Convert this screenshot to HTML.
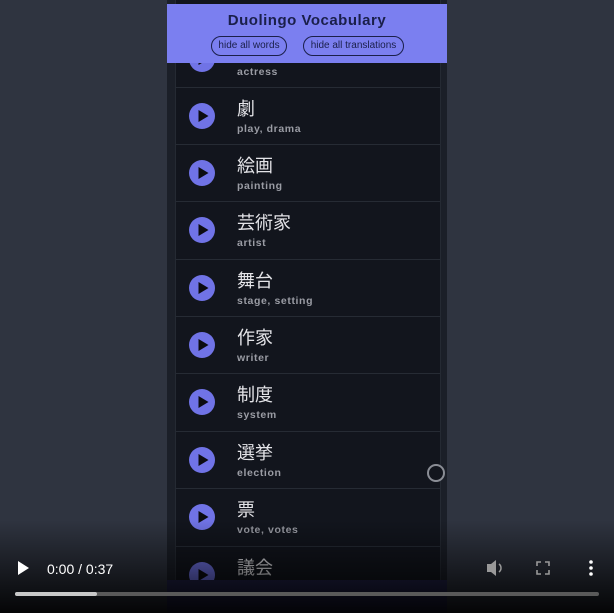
<!DOCTYPE html>
<html><head><meta charset="utf-8"><style>
html,body{margin:0;padding:0;width:614px;height:613px;overflow:hidden;background:#2f3440;font-family:"Liberation Sans","Noto Sans CJK JP",sans-serif}
#phone{position:absolute;left:167px;top:0;width:280px;height:613px;background:#1b1f28}
#list{position:absolute;left:175px;top:0;width:264px;height:613px;background:#12151d;border-left:1px solid #252a33;border-right:1px solid #252a33}
.row{position:absolute;left:0;width:264px;height:57px;border-top:1px solid #262b34}
.btn{position:absolute;left:13px;top:15px;width:26px;height:26px}
.w{position:absolute;left:61px;top:7px;font-size:18px;color:#e4e4e8}
.t{position:absolute;left:61px;top:35px;font-size:10.5px;color:#9a9ca4;letter-spacing:0.6px;font-weight:bold}
#hdr{position:absolute;left:167px;top:4px;width:280px;height:59px;background:#7b7ff0}
#hdr h1{margin:0;position:absolute;top:8px;width:100%;text-align:center;font-size:15px;color:#1a1f4a;letter-spacing:0.5px}
.pill{position:absolute;top:32px;height:20px;border:1.5px solid #1a1f4a;border-radius:10px;font-size:10px;text-align:center;color:#1a1f4a;box-sizing:border-box;line-height:17px}
#grad{position:absolute;left:0;top:520px;width:614px;height:93px;background:linear-gradient(rgba(0,0,0,0),rgba(0,0,0,0.9))}
#foot{position:absolute;left:167px;top:580px;width:280px;height:33px;background:#22234a}
</style></head><body>
<svg width="0" height="0" style="position:absolute"><defs><g id="pb"><circle cx="13" cy="13" r="13" fill="#7073e6"/><path d="M9.5 7 L19.5 13 L9.5 19Z" fill="#0c0c10"/></g></defs></svg>
<div id="phone"></div>
<div id="list">
<div class="row" style="top:30px"><svg class="btn"><use href="#pb"/></svg><div class="t">actress</div></div>
<div class="row" style="top:87px"><svg class="btn"><use href="#pb"/></svg><div class="w">劇</div><div class="t">play, drama</div></div>
<div class="row" style="top:144px"><svg class="btn"><use href="#pb"/></svg><div class="w">絵画</div><div class="t">painting</div></div>
<div class="row" style="top:201px"><svg class="btn"><use href="#pb"/></svg><div class="w">芸術家</div><div class="t">artist</div></div>
<div class="row" style="top:259px"><svg class="btn"><use href="#pb"/></svg><div class="w">舞台</div><div class="t">stage, setting</div></div>
<div class="row" style="top:316px"><svg class="btn"><use href="#pb"/></svg><div class="w">作家</div><div class="t">writer</div></div>
<div class="row" style="top:373px"><svg class="btn"><use href="#pb"/></svg><div class="w">制度</div><div class="t">system</div></div>
<div class="row" style="top:431px"><svg class="btn"><use href="#pb"/></svg><div class="w">選挙</div><div class="t">election</div></div>
<div class="row" style="top:488px"><svg class="btn"><use href="#pb"/></svg><div class="w">票</div><div class="t">vote, votes</div></div>
<div class="row" style="top:546px"><svg class="btn"><use href="#pb"/></svg><div class="w">議会</div></div>
</div>
<div style="position:absolute;left:427px;top:464px;width:14px;height:14px;border:2px solid #8a8d95;border-radius:50%;background:#12151d"></div>
<div id="foot"></div>
<div id="hdr"><h1>Duolingo Vocabulary</h1>
<div class="pill" style="left:44px;width:76px">hide all words</div>
<div class="pill" style="left:136px;width:101px">hide all translations</div></div>
<div id="grad"></div>
<svg style="position:absolute;left:0;top:555px" width="614" height="58">
<path d="M18 6 L29 13 L18 20Z" fill="#fff"/>
<text x="47" y="19" fill="#fff" font-size="14" font-family="Liberation Sans">0:00 / 0:37</text>
<path d="M487 9h4l5-4v16l-5-4h-4z" fill="#999"/><path d="M499 9a5 5 0 0 1 0 8" stroke="#999" stroke-width="1.5" fill="none"/>
<path d="M537 11v-4h4M545 7h4v4M549 15v4h-4M541 19h-4v-4" stroke="#999" stroke-width="1.6" fill="none"/>
<circle cx="591" cy="7" r="1.8" fill="#fff"/><circle cx="591" cy="13" r="1.8" fill="#fff"/><circle cx="591" cy="19" r="1.8" fill="#fff"/>
<rect x="15" y="37" width="584" height="4" rx="2" fill="#5a5a5a"/>
<rect x="15" y="37" width="82" height="4" rx="2" fill="#c8c8c8"/>
</svg>
</body></html>
